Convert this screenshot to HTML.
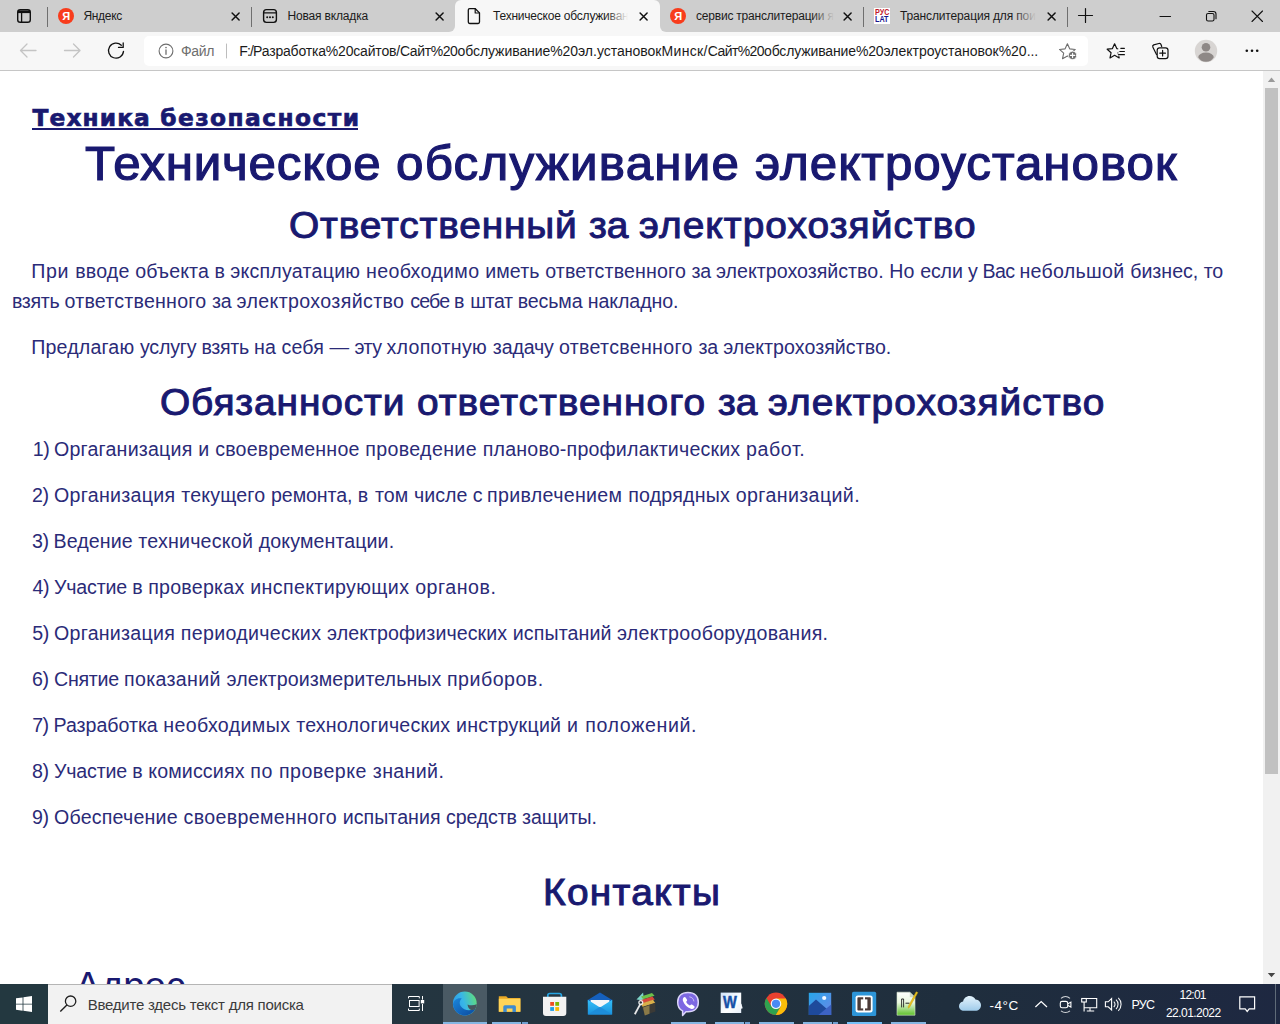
<!DOCTYPE html>
<html lang="ru">
<head>
<meta charset="utf-8">
<title>Техническое обслуживание электроустановок</title>
<style>
*{box-sizing:border-box;margin:0;padding:0}
html,body{width:1280px;height:1024px;overflow:hidden;background:#fff}
body{position:relative;font-family:"Liberation Sans",sans-serif;color:#191970}
.t{position:absolute;white-space:nowrap;color:#191970}
.w{left:0;width:1260px;height:30px}
.w span{position:absolute;top:0}
svg{position:absolute;overflow:visible}
.b{position:absolute}
/* browser chrome */
#tabbar{left:0;top:0;width:1280px;height:32px;background:#cecece}
#toolbar{left:0;top:32px;width:1280px;height:38px;background:#f7f7f7}
#tbline{left:0;top:70px;width:1280px;height:1px;background:#c6c6c6}
.sep{position:absolute;top:7px;width:1px;height:20px;background:#6f6f6f}
#acttab{left:455px;top:0;width:205px;height:32px;background:#f7f7f7;border-radius:6px 6px 0 0}
.foot{position:absolute;top:26px;width:6px;height:6px;background:#f7f7f7}
.foot i{position:absolute;left:0;top:0;width:6px;height:6px;background:#cecece}
#addr{left:144px;top:36.4px;width:944px;height:29.4px;background:#fff;border-radius:5px}
.fade{position:absolute;top:6px;height:20px;width:26px}
/* scrollbar */
#sbar{left:1263px;top:71px;width:17px;height:913px;background:#f1f1f1}
#thumb{left:1265px;top:88px;width:13px;height:686px;background:#c1c1c1}
/* taskbar */
#taskbar{left:0;top:984px;width:1280px;height:40px;background:linear-gradient(90deg,#233840 0,#243440 45%,#1f2e3d 74%,#1e2841 100%)}
#start{left:0;top:984px;width:48px;height:40px;background:#233840}
#search{left:48px;top:984px;width:344px;height:40px;background:#f2f2f2;border-top:1px solid #b5b5b5}
#edgebg{left:443.200px;top:984px;width:43.600px;height:40px;background:#4a5a64}
.run{position:absolute;top:1022px;height:2px;background:#85b6e2}
</style>
</head>
<body>
<!-- PAGE -->
<div id="page">
<div class="t w" id="lnk" style="left:0.0px;top:103px;font-size:23.3px;line-height:30px;font-weight:bold;font-family:'DejaVu Sans',sans-serif;-webkit-text-stroke:0.7px #191970"><span style="left:32.5px;letter-spacing:1.11px">Техника</span> <span style="left:160.2px;letter-spacing:1.44px">безопасности</span></div>
<div class="t w" id="h1" style="left:0.0px;top:134px;font-size:47.2px;line-height:60px;-webkit-text-stroke:1.2px #191970"><span style="left:85.0px;letter-spacing:0.75px;transform:scaleX(1.045);transform-origin:0 0">Техническое</span> <span style="left:396.0px;letter-spacing:1.17px;transform:scaleX(1.045);transform-origin:0 0">обслуживание</span> <span style="left:755.2px;letter-spacing:0.94px;transform:scaleX(1.045);transform-origin:0 0">электроустановок</span></div>
<div class="t w" id="h2a" style="left:0.0px;top:210px;font-size:37.2px;line-height:30px;-webkit-text-stroke:1.0px #191970"><span style="left:288.5px;letter-spacing:0.82px;transform:scaleX(1.045);transform-origin:0 0">Ответственный</span> <span style="left:588.8px;letter-spacing:-0.17px;transform:scaleX(1.045);transform-origin:0 0">за</span> <span style="left:638.5px;letter-spacing:0.99px;transform:scaleX(1.045);transform-origin:0 0">электрохозяйство</span></div>
<div class="t w" id="p1a" style="left:0.0px;top:256px;font-size:19.6px;line-height:30px;color:#2b2b78"><span style="left:31.2px;letter-spacing:0.66px">При</span> <span style="left:75.2px;letter-spacing:0.19px">вводе</span> <span style="left:135.2px;letter-spacing:0.1px">объекта</span> <span style="left:214.5px;letter-spacing:0px">в</span> <span style="left:230.2px;letter-spacing:0.24px">эксплуатацию</span> <span style="left:366.0px;letter-spacing:0.34px">необходимо</span> <span style="left:485.2px;letter-spacing:0.12px">иметь</span> <span style="left:545.2px;letter-spacing:0.15px">ответственного</span> <span style="left:691.5px;letter-spacing:-0.28px">за</span> <span style="left:716.0px;letter-spacing:0.02px">электрохозяйство.</span> <span style="left:889.2px;letter-spacing:0.17px">Но</span> <span style="left:920.2px;letter-spacing:-0.14px">если</span> <span style="left:968.0px;letter-spacing:0px">у</span> <span style="left:982.5px;letter-spacing:-0.55px">Вас</span> <span style="left:1019.5px;letter-spacing:0.29px">небольшой</span> <span style="left:1130.2px;letter-spacing:0.0px">бизнес,</span> <span style="left:1203.8px;letter-spacing:-0.3px">то</span></div>
<div class="t w" id="p1b" style="left:0.0px;top:286px;font-size:19.6px;line-height:30px;color:#2b2b78"><span style="left:12.0px;letter-spacing:-0.32px">взять</span> <span style="left:64.5px;letter-spacing:0.23px">ответственного</span> <span style="left:212.0px;letter-spacing:-0.28px">за</span> <span style="left:236.5px;letter-spacing:0.37px">электрохозяйство</span> <span style="left:410.2px;letter-spacing:-0.81px">себе</span> <span style="left:454.0px;letter-spacing:0px">в</span> <span style="left:470.2px;letter-spacing:-0.35px">штат</span> <span style="left:517.8px;letter-spacing:-0.13px">весьма</span> <span style="left:587.8px;letter-spacing:-0.1px">накладно.</span></div>
<div class="t w" id="p2" style="left:0.0px;top:332px;font-size:19.6px;line-height:30px;color:#2b2b78"><span style="left:31.2px;letter-spacing:0.18px">Предлагаю</span> <span style="left:140.0px;letter-spacing:-0.21px">услугу</span> <span style="left:201.5px;letter-spacing:-0.32px">взять</span> <span style="left:254.0px;letter-spacing:0.11px">на</span> <span style="left:281.5px;letter-spacing:0.13px">себя</span> <span style="left:329.5px;letter-spacing:0px">—</span> <span style="left:354.5px;letter-spacing:-0.5px">эту</span> <span style="left:386.5px;letter-spacing:0.31px">хлопотную</span> <span style="left:492.8px;letter-spacing:-0.15px">задачу</span> <span style="left:559.0px;letter-spacing:0.31px">ответсвенного</span> <span style="left:698.5px;letter-spacing:-0.21px">за</span> <span style="left:723.2px;letter-spacing:0.05px">электрохозяйство.</span></div>
<div class="t w" id="h2b" style="left:0.0px;top:387px;font-size:37.2px;line-height:30px;-webkit-text-stroke:1.0px #191970"><span style="left:159.5px;letter-spacing:0.85px;transform:scaleX(1.045);transform-origin:0 0">Обязанности</span> <span style="left:416.5px;letter-spacing:0.97px;transform:scaleX(1.045);transform-origin:0 0">ответственного</span> <span style="left:717.5px;letter-spacing:0.02px;transform:scaleX(1.045);transform-origin:0 0">за</span> <span style="left:767.8px;letter-spacing:0.97px;transform:scaleX(1.045);transform-origin:0 0">электрохозяйство</span></div>
<div class="t w" id="l1" style="left:0.0px;top:434px;font-size:19.6px;line-height:30px;color:#2b2b78"><span style="left:32.8px;letter-spacing:-0.56px">1)</span> <span style="left:54.0px;letter-spacing:0.21px">Оргаганизация</span> <span style="left:198.2px;letter-spacing:0px">и</span> <span style="left:215.2px;letter-spacing:0.2px">своевременное</span> <span style="left:365.2px;letter-spacing:0.37px">проведение</span> <span style="left:482.8px;letter-spacing:0.19px">планово-профилактических</span> <span style="left:746.0px;letter-spacing:0.6px">работ.</span></div>
<div class="t w" id="l2" style="left:0.0px;top:480px;font-size:19.6px;line-height:30px;color:#2b2b78"><span style="left:32.0px;letter-spacing:-0.29px">2)</span> <span style="left:54.0px;letter-spacing:0.3px">Организация</span> <span style="left:181.2px;letter-spacing:0.19px">текущего</span> <span style="left:271.0px;letter-spacing:-0.08px">ремонта,</span> <span style="left:357.8px;letter-spacing:0px">в</span> <span style="left:375.0px;letter-spacing:0.11px">том</span> <span style="left:414.0px;letter-spacing:0.01px">числе</span> <span style="left:472.8px;letter-spacing:0px">с</span> <span style="left:487.0px;letter-spacing:0.34px">привлечением</span> <span style="left:628.2px;letter-spacing:0.22px">подрядных</span> <span style="left:735.8px;letter-spacing:0.38px">организаций.</span></div>
<div class="t w" id="l3" style="left:0.0px;top:526px;font-size:19.6px;line-height:30px;color:#2b2b78"><span style="left:32.0px;letter-spacing:-0.46px">3)</span> <span style="left:53.5px;letter-spacing:0.09px">Ведение</span> <span style="left:138.2px;letter-spacing:0.24px">технической</span> <span style="left:258.8px;letter-spacing:0.1px">документации.</span></div>
<div class="t w" id="l4" style="left:0.0px;top:572px;font-size:19.6px;line-height:30px;color:#2b2b78"><span style="left:32.5px;letter-spacing:-0.46px">4)</span> <span style="left:54.0px;letter-spacing:-0.18px">Участие</span> <span style="left:132.2px;letter-spacing:0px">в</span> <span style="left:148.2px;letter-spacing:0.25px">проверках</span> <span style="left:250.2px;letter-spacing:0.38px">инспектирующих</span> <span style="left:415.2px;letter-spacing:0.54px">органов.</span></div>
<div class="t w" id="l5" style="left:0.0px;top:618px;font-size:19.6px;line-height:30px;color:#2b2b78"><span style="left:32.2px;letter-spacing:-0.36px">5)</span> <span style="left:54.0px;letter-spacing:0.26px">Организация</span> <span style="left:180.8px;letter-spacing:0.31px">периодических</span> <span style="left:327.0px;letter-spacing:0.09px">электрофизических</span> <span style="left:512.8px;letter-spacing:0.1px">испытаний</span> <span style="left:617.0px;letter-spacing:0.29px">электрооборудования.</span></div>
<div class="t w" id="l6" style="left:0.0px;top:664px;font-size:19.6px;line-height:30px;color:#2b2b78"><span style="left:32.0px;letter-spacing:-0.29px">6)</span> <span style="left:54.0px;letter-spacing:-0.26px">Снятие</span> <span style="left:124.0px;letter-spacing:0.33px">показаний</span> <span style="left:226.5px;letter-spacing:0.1px">электроизмерительных</span> <span style="left:447.0px;letter-spacing:0.5px">приборов.</span></div>
<div class="t w" id="l7" style="left:0.0px;top:710px;font-size:19.6px;line-height:30px;color:#2b2b78"><span style="left:32.2px;letter-spacing:-0.53px">7)</span> <span style="left:53.5px;letter-spacing:-0.02px">Разработка</span> <span style="left:163.2px;letter-spacing:0.38px">необходимых</span> <span style="left:296.2px;letter-spacing:0.2px">технологических</span> <span style="left:456.0px;letter-spacing:0.26px">инструкций</span> <span style="left:567.0px;letter-spacing:0px">и</span> <span style="left:585.2px;letter-spacing:0.64px">положений.</span></div>
<div class="t w" id="l8" style="left:0.0px;top:756px;font-size:19.6px;line-height:30px;color:#2b2b78"><span style="left:32.0px;letter-spacing:-0.29px">8)</span> <span style="left:54.0px;letter-spacing:-0.18px">Участие</span> <span style="left:132.2px;letter-spacing:0px">в</span> <span style="left:148.2px;letter-spacing:0.15px">комиссиях</span> <span style="left:250.2px;letter-spacing:0.62px">по</span> <span style="left:279.0px;letter-spacing:0.47px">проверке</span> <span style="left:372.8px;letter-spacing:0.37px">знаний.</span></div>
<div class="t w" id="l9" style="left:0.0px;top:802px;font-size:19.6px;line-height:30px;color:#2b2b78"><span style="left:32.0px;letter-spacing:-0.29px">9)</span> <span style="left:54.0px;letter-spacing:0.21px">Обеспечение</span> <span style="left:183.5px;letter-spacing:0.36px">своевременного</span> <span style="left:342.8px;letter-spacing:0.03px">испытания</span> <span style="left:446.0px;letter-spacing:-0.15px">средств</span> <span style="left:522.0px;letter-spacing:-0.08px">защиты.</span></div>
<div class="t" id="h2c" style="left:543.0px;top:877px;font-size:37.2px;letter-spacing:1.23px;line-height:30px;-webkit-text-stroke:1.0px #191970;transform:scaleX(1.045);transform-origin:0 0">Контакты</div>
<div class="t" id="adr" style="left:75.0px;top:971px;font-size:38.5px;letter-spacing:0.0px;line-height:30px">Адрес</div>
<div class="b" id="lnku" style="left:32px;top:128.3px;width:326px;height:2.2px;background:#191970"></div>
</div>
<!-- CHROME -->
<div class="b" id="tabbar"></div>
<div class="b" id="acttab"></div>
<div class="foot" style="left:449px"><i style="border-radius:0 0 6px 0"></i></div>
<div class="foot" style="left:660px"><i style="border-radius:0 0 0 6px"></i></div>
<div class="b" id="toolbar"></div>
<div class="b" id="tbline"></div>
<div class="b" id="addr"></div>
<div class="sep" style="left:47.2px"></div>
<div class="sep" style="left:251.2px"></div>
<div class="sep" style="left:863.2px"></div>
<div class="sep" style="left:1067.2px"></div>
<div class="t" id="tb1" style="left:83.4px;top:1px;font-size:12px;letter-spacing:-0.28px;line-height:30px;color:#1b1b1b">Яндекс</div>
<div class="t" id="tb2" style="left:287.5px;top:1px;font-size:12px;letter-spacing:-0.167px;line-height:30px;color:#1b1b1b">Новая вкладка</div>
<div class="t" id="tb3" style="left:493.0px;top:1px;font-size:12px;letter-spacing:-0.214px;line-height:30px;color:#1b1b1b">Техническое обслуживан</div>
<div class="t" id="tb4" style="left:696.0px;top:1px;font-size:12px;letter-spacing:-0.205px;line-height:30px;color:#1b1b1b">сервис транслитерации я</div>
<div class="t" id="tb5" style="left:900.0px;top:1px;font-size:12px;letter-spacing:-0.143px;line-height:30px;color:#1b1b1b">Транслитерация для пои</div>
<div class="t" id="fil" style="left:181.0px;top:36px;font-size:14px;letter-spacing:-0.333px;line-height:30px;color:#6e6e6e">Файл</div>
<div class="t w" id="url" style="left:0.0px;top:36px;font-size:14px;line-height:30px;color:#1b1b1b"><span style="left:239.3px;letter-spacing:-0.88px">F:/</span><span style="left:253.0px;letter-spacing:-0.18px">Разработка%20сайтов/</span><span style="left:400.0px;letter-spacing:-0.4px">Сайт%20</span><span style="left:457.5px;letter-spacing:-0.07px">обслуживание%20</span><span style="left:578.0px;letter-spacing:0.0px">эл.установок</span><span style="left:661.5px;letter-spacing:0.34px">Минск/</span><span style="left:707.8px;letter-spacing:-0.59px">Сайт%20</span><span style="left:764.0px;letter-spacing:-0.14px">обслуживание%20</span><span style="left:883.5px;letter-spacing:-0.02px">электроустановок%20...</span></div>
<div class="fade" style="left:606px;background:linear-gradient(90deg,rgba(247,247,247,0),#f7f7f7 85%)"></div>
<div class="fade" style="left:812px;background:linear-gradient(90deg,rgba(206,206,206,0),#cecece 85%)"></div>
<div class="fade" style="left:1014px;background:linear-gradient(90deg,rgba(206,206,206,0),#cecece 85%)"></div>
<svg style="left:0;top:0" width="1280" height="71" viewBox="0 0 1280 71" fill="none" stroke-linecap="round" stroke-linejoin="round">
<!-- tab actions -->
<rect x="17.7" y="9.7" width="12.6" height="12.6" rx="2.6" stroke="#111" stroke-width="1.4"/>
<path d="M18 10.5h12v2.6h-12z" fill="#111"/><path d="M21.6 12v10" stroke="#111" stroke-width="1.3"/>
<!-- yandex icons -->
<circle cx="66" cy="16" r="8" fill="#f83c1c"/><circle cx="678" cy="16" r="8" fill="#f83c1c"/>
<!-- new tab page icon -->
<rect x="263.600" y="9.600" width="12.800" height="12.800" rx="2.800" stroke="#111" stroke-width="1.400"/>
<path d="M264 12.900h12.400" stroke="#111" stroke-width="1.300"/>
<circle cx="267.200" cy="17.300" r="1" fill="#111"/><circle cx="270" cy="17.300" r="1" fill="#111"/><circle cx="272.800" cy="17.300" r="1" fill="#111"/>
<!-- document icon -->
<path d="M469.7 8.7h5.6l4.2 4.2v9.2a1.4 1.4 0 0 1-1.4 1.4h-8.4a1.4 1.4 0 0 1-1.4-1.4v-12a1.4 1.4 0 0 1 1.4-1.4z" stroke="#111" stroke-width="1.3"/>
<path d="M475.2 8.9v4.1h4.1" stroke="#111" stroke-width="1.2"/>
<!-- rus lat icon bg -->
<rect x="874" y="8" width="16" height="16" fill="#fff"/>
<!-- tab close X -->
<g stroke="#111" stroke-width="1.500">
<path d="M232.1 13l7 7m0-7l-7 7"/><path d="M436.1 13l7 7m0-7l-7 7"/><path d="M640.1 13l7 7m0-7l-7 7"/><path d="M844.1 13l7 7m0-7l-7 7"/><path d="M1048.1 13l7 7m0-7l-7 7"/>
</g>
<!-- plus -->
<path d="M1078.5 15.5h14M1085.5 8.5v14" stroke="#111" stroke-width="1.2"/>
<!-- window controls -->
<path d="M1160 16.5h10.5" stroke="#111" stroke-width="1.1"/>
<rect x="1206.5" y="13.5" width="7.5" height="7.5" rx="1.6" stroke="#111" stroke-width="1.1"/>
<path d="M1208.8 11.5h4.6a2.6 2.6 0 0 1 2.6 2.6v4.6" stroke="#111" stroke-width="1.1"/>
<path d="M1252 11l10.5 10.5m0-10.5L1252 21.5" stroke="#111" stroke-width="1.1"/>
<!-- back / forward (disabled) -->
<g stroke="#c4c4c4" stroke-width="1.3"><path d="M21 50.5h15M27 44l-6.5 6.5L27 57"/><path d="M64.5 50.5h15M73.5 44l6.5 6.5-6.5 6.5"/></g>
<!-- refresh -->
<path d="M123.5 51.4A7.5 7.5 0 1 1 121.3 45.300" stroke="#111" stroke-width="1.300"/>
<path d="M123.200 43v4.400h-4.700" stroke="#111" stroke-width="1.300"/>
<!-- info -->
<circle cx="166" cy="51" r="6.9" stroke="#6e6e6e" stroke-width="1.1"/><path d="M166 50v4.3" stroke="#6e6e6e" stroke-width="1.3"/><circle cx="166" cy="47.6" r="0.8" fill="#6e6e6e"/>
<path d="M226.5 44v14" stroke="#bdbdbd" stroke-width="1"/>
<!-- add favourite star -->
<path d="M1067.40 43.70 L1069.69 48.84 L1075.29 49.44 L1071.11 53.21 L1072.28 58.71 L1067.40 55.90 L1062.52 58.71 L1063.69 53.21 L1059.51 49.44 L1065.11 48.84Z" stroke="#6e6e6e" stroke-width="1.1"/>
<circle cx="1072.6" cy="55.4" r="4.2" fill="#6e6e6e" stroke="#fff" stroke-width="0.8"/><path d="M1070.4 55.4h4.4M1072.6 53.2v4.4" stroke="#fff" stroke-width="1.1"/>
<!-- favourites -->
<path d="M1114.60 43.80 L1116.77 48.61 L1122.02 49.19 L1118.12 52.74 L1119.18 57.91 L1114.60 55.30 L1110.02 57.91 L1111.08 52.74 L1107.18 49.19 L1112.43 48.61Z" stroke="#111" stroke-width="1.2"/>
<rect x="1118.200" y="47.200" width="7" height="9" fill="#f7f7f7" stroke="none"/><path d="M1119.800 51.500h4.600M1118.600 54.700h5.800M1120.800 48.300h3.600" stroke="#111" stroke-width="1.200"/>
<!-- collections -->
<path d="M1156.5 54.5l-3.6-7.2a1.8 1.8 0 0 1 .8-2.4l5.2-1.4a1.8 1.8 0 0 1 2.2 1.2l.6 1.8" stroke="#111" stroke-width="1.2"/>
<rect x="1157.2" y="47.8" width="10.8" height="10.8" rx="2.4" stroke="#111" stroke-width="1.2" fill="#f7f7f7"/>
<path d="M1159.8 53.2h5.6M1162.6 50.4v5.6" stroke="#111" stroke-width="1.2"/>
<!-- avatar -->
<circle cx="1206" cy="51" r="11.2" fill="#d8d5d3"/>
<circle cx="1206" cy="47.2" r="4.3" fill="#8e8886"/>
<path d="M1198.2 57.2a7.8 4.6 0 0 1 15.6 0 9 9 0 0 1-15.6 0z" fill="#8e8886"/>
<!-- menu dots -->
<circle cx="1246.8" cy="50.8" r="1.3" fill="#111"/><circle cx="1252" cy="50.8" r="1.3" fill="#111"/><circle cx="1257.2" cy="50.8" r="1.3" fill="#111"/>
</svg>
<div class="t" style="left:62.3px;top:9.5px;font-size:11px;line-height:13px;font-weight:bold;color:#fff">Я</div>
<div class="t" style="left:674.3px;top:9.5px;font-size:11px;line-height:13px;font-weight:bold;color:#fff">Я</div>
<div class="t" style="left:874.6px;top:8.2px;font-size:9px;line-height:9px;font-weight:bold;color:#c2182a;transform:scaleX(.8);transform-origin:0 0">РУС</div>
<div class="t" style="left:875.4px;top:15.4px;font-size:9px;line-height:9px;font-weight:bold;color:#16168f;transform:scaleX(.8);transform-origin:0 0">LAT</div>

<!-- SCROLLBAR -->
<div class="b" id="sbar"></div>
<div class="b" id="thumb"></div>
<svg style="left:0;top:0" width="1280" height="1024"><path d="M1267.800 82L1271.500 77.600 1275.200 82Z" fill="#9a9a9a"/><path d="M1267.800 973L1271.500 977.300 1275.200 973Z" fill="#454545"/></svg>
<!-- TASKBAR -->
<div class="b" id="taskbar"></div>
<div class="b" id="start"></div>
<div class="b" id="search"></div>
<div class="b" id="edgebg"></div>
<div class="t" id="srch" style="left:87.7px;top:990px;font-size:15px;letter-spacing:-0.231px;line-height:30px;color:#3b3b3b">Введите здесь текст для поиска</div>
<div class="t" id="tmp" style="left:989.5px;top:991px;font-size:13.5px;letter-spacing:0.5px;line-height:30px;color:#fff">-4°C</div>
<div class="t" id="lng" style="left:1131.5px;top:990px;font-size:12.5px;letter-spacing:-0.75px;line-height:30px;color:#fff">РУС</div>
<div class="t" id="clk" style="left:1179.5px;top:980px;font-size:12px;letter-spacing:-0.75px;line-height:30px;color:#fff">12:01</div>
<div class="t" id="dat" style="left:1166.0px;top:998px;font-size:12px;letter-spacing:-0.556px;line-height:30px;color:#fff">22.01.2022</div>
<svg style="left:0;top:984px" width="1280" height="40" viewBox="0 984 1280 40" fill="none">
<defs>
<linearGradient id="gEdge" x1="0" y1=".6" x2="1" y2=".3"><stop offset="0" stop-color="#2a9be8"/><stop offset=".45" stop-color="#38b6e8"/><stop offset="1" stop-color="#5fdc7e"/></linearGradient>
<linearGradient id="gEdge2" x1="0" y1="0" x2="1" y2="1"><stop offset="0" stop-color="#1b86dc"/><stop offset="1" stop-color="#0c4a9e"/></linearGradient>
<linearGradient id="gCloud" x1="0" y1="0" x2="0" y2="1"><stop offset="0" stop-color="#e4f3fc"/><stop offset="1" stop-color="#9fcbea"/></linearGradient>
<linearGradient id="gNpp" x1="0" y1="0" x2="0" y2="1"><stop offset="0" stop-color="#ffffff"/><stop offset=".45" stop-color="#e9f7df"/><stop offset="1" stop-color="#5dc02a"/></linearGradient>
<linearGradient id="gPh" x1="0" y1="0" x2="1" y2="1"><stop offset="0" stop-color="#27a6ea"/><stop offset="1" stop-color="#6a86e6"/></linearGradient>
<linearGradient id="gMail" x1="0" y1="0" x2="0" y2="1"><stop offset="0" stop-color="#35c0f8"/><stop offset="1" stop-color="#1a92de"/></linearGradient>
<linearGradient id="gW" x1="0" y1="0" x2="1" y2="1"><stop offset="0" stop-color="#cfe3fa"/><stop offset=".6" stop-color="#ffffff"/><stop offset="1" stop-color="#e6effa"/></linearGradient>
</defs>
<!-- windows logo -->
<path d="M16 998.3l6.6-.9v6.3H16zM23.4 997.3L32 996v7.7h-8.6zM16 1004.4h6.6v6.3l-6.6-.9zM23.4 1004.4H32v7.6l-8.6-1.2z" fill="#fff"/>
<!-- search -->
<circle cx="70.6" cy="1001.2" r="5.2" stroke="#1f1f1f" stroke-width="1.3"/><path d="M66.9 1005.1l-6.6 6.5" stroke="#1f1f1f" stroke-width="1.4"/>
<!-- task view -->
<g stroke="#fff" stroke-width="1"><path d="M408.500 998.400v-1.900h10.800v1.900M408.500 1008.600v1.900h10.800v-1.900"/><rect x="409.500" y="1000.500" width="9.600" height="6"/><path d="M422.500 996v3.600M422.500 1004v7"/></g><rect x="420.800" y="1000" width="3.400" height="3.400" fill="#fff"/>
<!-- edge -->
<circle cx="464.800" cy="1003.500" r="11.900" fill="url(#gEdge)"/>
<path d="M453 1004.500C453.400 999.800 457.600 997.400 461.800 998.400 459.400 1000.200 459 1003.800 461 1006.600 463.600 1010.200 469.500 1011.600 475.600 1008.600A11.900 11.900 0 0 1 453 1004.500Z" fill="url(#gEdge2)"/>
<path d="M467.600 1004.400C470 1005.600 473.600 1005.600 476.700 1004.200 476.600 1006.400 475.800 1008.200 474.600 1009.600 471 1010.900 467.800 1008.600 467.600 1004.400Z" fill="#46555f"/>
<!-- explorer -->
<path d="M498.800 996.200h7.400l1.800 1.700h12.400v13.900h-21.600z" fill="#e9a825"/>
<path d="M498.800 998.800h21.600v13h-21.600z" fill="#ffd458"/>
<path d="M503.300 1012v-5.200a1.600 1.600 0 0 1 1.600-1.600h9.400a1.600 1.600 0 0 1 1.600 1.600v5.200h-3.400v-3.600h-5.800v3.600z" fill="#3d8bd0"/>
<!-- store -->
<path d="M547.800 998.200v-2.700a2 2 0 0 1 2-2h9.600a2 2 0 0 1 2 2v2.700" stroke="#25a4e2" stroke-width="1.700"/>
<path d="M543 996.700h23.300v16.200a3 3 0 0 1-3 3h-17.300a3 3 0 0 1-3-3z" fill="#f2f2f2"/>
<rect x="550.200" y="1002" width="3.800" height="3.800" fill="#f04e23"/><rect x="555.300" y="1002" width="3.800" height="3.800" fill="#7db700"/><rect x="550.200" y="1007.100" width="3.800" height="3.800" fill="#1f9fe8"/><rect x="555.300" y="1007.100" width="3.800" height="3.800" fill="#fbb800"/>
<!-- mail -->
<path d="M587.800 1000l12.200-7.600 12.200 7.600v3h-24.400z" fill="#1560bd"/>
<path d="M590.600 1000h18.800v8h-18.800z" fill="#f4f6f8"/>
<path d="M587.800 999.800l12.200 7.600 12.200-7.600v14.800h-24.400z" fill="url(#gMail)"/>
<path d="M587.800 1014.600l12.200-7.800 12.200 7.800z" fill="#1d8edb"/>
<!-- archiver -->
<path d="M636.500 999.600l6.600-7 .8 8z" fill="#7fd6c8"/>
<path d="M641 996.400l11-3.300 2.600 2.600-11.400 3.600z" fill="#6cc04a"/>
<path d="M640.400 1000.300l12-3.800 2.400 2.900-12 4z" fill="#d8483a"/>
<path d="M640.600 1003.800l12.400-4 2.300 3.200-12.400 4.200z" fill="#d9b04a"/>
<path d="M642 1007l13.200-4.300.2 8.700-10.600 3.900z" fill="#3b3a36"/>
<path d="M643 1007.400l6.500-2.100v8.400l-4.700 1.700z" fill="#8a7a48"/>
<path d="M634.800 1014.300l5.600-10.400" stroke="#e8e8e8" stroke-width="1.800"/><circle cx="640.800" cy="1002.600" r="1.900" stroke="#e8e8e8" stroke-width="1.300"/>
<!-- viber -->
<path d="M688 992.600c6.400 0 10.300 3.600 10.300 9.600s-3.900 9.600-10.300 9.600c-.700 0-1.400 0-2-.100l-3.400 3.700v-4.500c-3.200-1.500-4.900-4.500-4.900-8.700 0-6 3.900-9.600 10.300-9.600z" fill="#7d68e2" stroke="#dcd6fa" stroke-width="1.500" stroke-linejoin="round"/>
<path d="M683.600 997.600c.600-.700 1.500-.700 2 0l1.300 1.900c.400.600.300 1.200-.200 1.700l-.600.600c.800 1.800 2 3 3.800 3.800l.700-.700c.500-.500 1.100-.500 1.700-.100l1.800 1.300c.700.500.700 1.300.100 1.900-.900 1-2 1.300-3.300.800-3.800-1.400-6.600-4.200-7.900-7.900-.400-1.200-.200-2.400.600-3.300z" fill="#fff"/>
<path d="M689.300 996.800c2.600.300 4.300 2 4.600 4.600" stroke="#fff" stroke-width=".9" opacity=".6"/>
<!-- word -->
<rect x="720.700" y="992.600" width="20.500" height="20.400" fill="url(#gW)"/>
<path d="M736.800 1005.200l4.600-1.400 1.300 4.400-4.600 1.500z" fill="#f3f6fb"/>
<!-- chrome -->
<circle cx="776" cy="1003.800" r="11.200" fill="#e8412f"/>
<path d="M776 998.500L785.870 998.500A11.200 11.200 0 0 1 775.650 1015L780.590 1006.450Z" fill="#fbbd09"/>
<path d="M780.590 1006.450L775.650 1015A11.200 11.200 0 0 1 766.480 997.900L771.410 1006.450Z" fill="#2fa24f"/>
<circle cx="776" cy="1003.800" r="5.300" fill="#f4f6fb"/><circle cx="776" cy="1003.800" r="4.100" fill="#4a8af4"/>
<!-- photos -->
<rect x="808.800" y="992.800" width="22.400" height="22.200" fill="url(#gPh)"/>
<path d="M808.800 1006l7.200-6.600 15.200 13.400v2.200h-22.400z" fill="#1e4a9c"/>
<path d="M831.200 1004.400v10.600h-12.800z" fill="#3d63c4"/>
<circle cx="824.200" cy="998" r="2.100" fill="#f3f8ff"/>
<!-- brackets -->
<rect x="852" y="991.800" width="24.200" height="24.200" rx="1.600" fill="#2d95d8"/>
<rect x="855.600" y="995.400" width="17" height="17" rx="2.200" fill="#fff"/>
<rect x="857.400" y="997.200" width="13.400" height="13.400" rx=".8" fill="#4b3b38"/>
<rect x="860.800" y="999.400" width="6.600" height="9" fill="#fff"/>
<rect x="863.200" y="997" width="1.800" height="13.800" fill="#fff"/>
<!-- notepad++ -->
<path d="M897 992.200h12.800l5.200 5v18h-18z" fill="url(#gNpp)" stroke="#d7e6cf" stroke-width=".6"/>
<path d="M909.800 992.200v5h5.200z" fill="#c9d6c4"/>
<path d="M901.600 999v8.400M903.600 999v8.400" stroke="#222" stroke-width=".9"/><path d="M901.600 999h2M905.500 1003.200h4" stroke="#222" stroke-width="1"/>
<path d="M917.800 992.600l-8.200 14.600-1.300 1-.1-1.800 8-14.600z" fill="#e9c21f" stroke="#c9a010" stroke-width=".5"/>
<!-- cloud -->
<path d="M964 1010.800c-2.900 0-5-2-5-4.600 0-2.400 1.800-4.300 4.100-4.600.5-3.200 3.200-5.600 6.500-5.600 2.600 0 4.800 1.400 5.900 3.500 3.100.2 5.500 2.700 5.500 5.700 0 3.100-2.500 5.600-5.700 5.600z" fill="url(#gCloud)"/>
<!-- chevron -->
<path d="M1035.400 1007l5.800-5.500 5.800 5.500" stroke="#fff" stroke-width="1.200"/>
<!-- meet now -->
<g stroke="#fff" stroke-width="1.100"><rect x="1060.300" y="1001.400" width="7.400" height="6.400" rx="1.800"/><path d="M1067.900 1003.800l3-1.700v5l-3-1.700"/><path d="M1061 998.300a7 7 0 0 1 9 0M1061 1010.800a7 7 0 0 0 9 0" opacity=".8"/></g>
<!-- network -->
<g stroke="#fff" stroke-width="1.100"><path d="M1085.200 998.500h11.500v9.300h-12.600M1090 1007.800v3.200M1086.800 1011h7.400M1084.100 1002v9.500"/><rect x="1081.700" y="998.500" width="4.600" height="3.500"/></g>
<!-- volume -->
<g stroke="#fff" stroke-width="1.100"><path d="M1105.400 1001.800h2.800l3.400-3.200v11.400l-3.400-3.200h-2.800z"/><path d="M1113.800 1001.600a3.600 3.600 0 0 1 0 5.400M1116 999.600a6.400 6.400 0 0 1 0 9.400M1118.300 997.800a9 9 0 0 1 0 13" opacity=".95"/></g>
<!-- notifications -->
<path d="M1239.800 996.800h14.800v12h-5.400l-2 2.600-2-2.600h-5.400z" stroke="#fff" stroke-width="1.200"/>
<path d="M1275.500 984v40" stroke="#5f6b78" stroke-width="1"/>
</svg>
<div class="t" style="left:723.200px;top:994px;font-size:17px;line-height:18px;font-weight:bold;color:#1750a8;transform:scaleX(.86);transform-origin:0 0;-webkit-text-stroke:.5px #1750a8">W</div>
<div class="run" style="left:443.200px;width:43.600px"></div>
<div class="run" style="left:491.800px;width:29px"></div><div class="run" style="left:522px;width:6px;background:#6f9fd0"></div>
<div class="run" style="left:671.200px;width:34.600px"></div>
<div class="run" style="left:715.200px;width:28.600px"></div><div class="run" style="left:744.800px;width:5px;background:#6f9fd0"></div>
<div class="run" style="left:759.200px;width:34.600px"></div>
<div class="run" style="left:803.200px;width:28.600px"></div><div class="run" style="left:832.800px;width:5px;background:#6f9fd0"></div>
<div class="run" style="left:847.200px;width:34.600px;background:#76c0f8"></div>
<div class="run" style="left:891.200px;width:34.600px"></div>

</body>
</html>
